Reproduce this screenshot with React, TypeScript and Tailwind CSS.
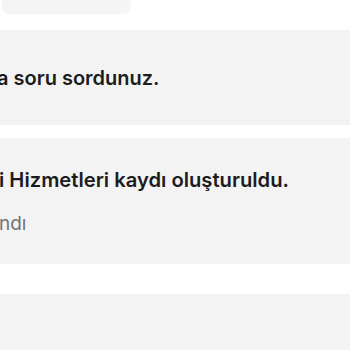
export default function App() {
  const font = { fontFamily: 'Inter, "Noto Sans", sans-serif' };
  return (
    <div className="w-[350px] h-[350px] overflow-hidden bg-white flex flex-col" style={font}>
      <div className="h-[30px] shrink-0 bg-white flex items-start pl-[2px]">
        <div className="w-[129px] h-[14px] rounded-b-[7px] bg-[#f5f5f5]" />
      </div>
      <div className="h-[95px] shrink-0 bg-[#f3f3f3] flex items-start overflow-hidden">
        <p className="mt-[36px] ml-[-3px] whitespace-nowrap text-[20px] leading-[24px] font-semibold text-[#1c1c1e]">
          a soru sordunuz.
        </p>
      </div>
      <div className="h-[13px] shrink-0 bg-white" />
      <div className="h-[126px] shrink-0 bg-[#f3f3f3] flex flex-col overflow-hidden">
        <p className="mt-[30px] ml-[-1px] whitespace-nowrap text-[20.2px] leading-[24px] font-semibold text-[#1c1c1e]">
          i Hizmetleri kaydı oluşturuldu.
        </p>
        <p className="mt-[21px] ml-[-1px] whitespace-nowrap text-[19px] leading-[22px] text-[#747474]">
          ndı
        </p>
      </div>
      <div className="h-[30px] shrink-0 bg-white" />
      <div className="flex-1 bg-[#f3f3f3]" />
    </div>
  );
}
